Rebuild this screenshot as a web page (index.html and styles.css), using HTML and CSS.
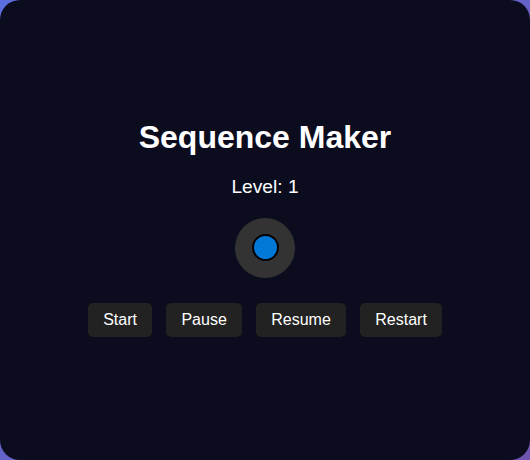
FILE: index.html
```html
<!DOCTYPE html>
<html lang="en">
<head>
    <meta charset="UTF-8">
    <meta name="viewport" content="width=device-width, initial-scale=1.0">
    <title>Sequence Maker</title>
    <link rel="stylesheet" href="styles.css">
</head>
<body>
    <div class="container">
        <h1 class="title">Sequence Maker</h1>
        <div id="level" class="level">Level: 1</div>
        <div class="pad">
            <div id="dot" class="dot"></div>
        </div>
        <div class="controls">
            <button id="start-btn" class="ctrl-btn">Start</button>
            <button id="pause-btn" class="ctrl-btn">Pause</button>
            <button id="resume-btn" class="ctrl-btn">Resume</button>
            <button id="restart-btn" class="ctrl-btn">Restart</button>
        </div>
    </div>
</body>
</html>
```

FILE: styles.css
```css
html, body {
    height: 100%;
}

body {
    margin: 0;
    font-family: "Liberation Sans", Arial, sans-serif;
    background: linear-gradient(135deg, #5b6fe0 0%, #6f55b0 100%);
    color: #FFFFFF;
}

.container {
    height: 100%;
    box-sizing: border-box;
    border-radius: 20px;
    background-color: #0b0d1f;
    display: flex;
    flex-direction: column;
    justify-content: center;
    align-items: center;
    text-align: center;
}

.title {
    margin: 0 0 20px;
    font-size: 32px;
    font-weight: bold;
}

.level {
    margin-bottom: 20px;
    font-size: 1.2em;
}

.pad {
    width: 60px;
    height: 60px;
    border-radius: 50%;
    background-color: #333333;
    display: flex;
    justify-content: center;
    align-items: center;
    margin-bottom: 20px;
}

.dot {
    width: 23px;
    height: 23px;
    border-radius: 50%;
    background-color: #0078d7;
    border: 2px solid #000000;
}

.ctrl-btn {
    margin: 5px;
    padding: 8px 15px;
    border: none;
    border-radius: 5px;
    background-color: #222222;
    color: #FFFFFF;
    font-family: "Liberation Sans", Arial, sans-serif;
    font-size: 16px;
    cursor: pointer;
}

.ctrl-btn:hover {
    background-color: #333333;
}
```
